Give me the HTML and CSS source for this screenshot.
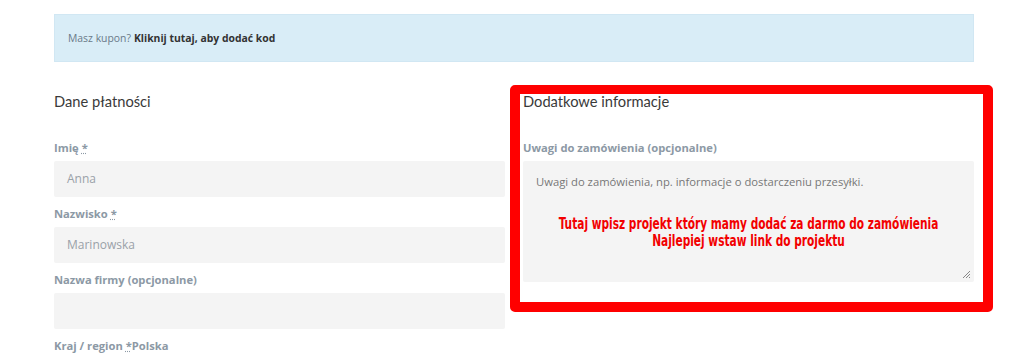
FILE: index.html
```html
<!DOCTYPE html>
<html lang="pl">
<head>
    <meta charset="UTF-8">
    <title>Zamówienie</title>
    <link rel="stylesheet" href="styles.css">
</head>
<body>
    <div class="checkout">
        <div class="coupon">
            Masz kupon? <a href="#">Kliknij tutaj, aby dodać kod</a>
        </div>

        <div class="columns">
            <div class="col">
                <h3>Dane płatności</h3>
                <label>Imię <abbr>*</abbr></label>
                <div class="input">Anna</div>
                <label>Nazwisko <abbr>*</abbr></label>
                <div class="input">Marinowska</div>
                <label>Nazwa firmy (opcjonalne)</label>
                <div class="input"></div>
                <label>Kraj / region <abbr>*</abbr>Polska</label>
            </div>

            <div class="col">
                <h3>Dodatkowe informacje</h3>
                <label>Uwagi do zamówienia (opcjonalne)</label>
                <div class="textarea">
                    <p class="placeholder">Uwagi do zamówienia, np. informacje o dostarczeniu przesyłki.</p>
                    <p class="note">Tutaj wpisz projekt który mamy dodać za darmo do zamówienia</p>
                    <p class="note">Najlepiej wstaw link do projektu</p>
                    <svg class="grip" width="9" height="9" viewBox="0 0 9 9">
                        <path d="M1 8 L8 1 M4 8 L8 4 M7 8 L8 7" stroke="#888" stroke-width="1"/>
                    </svg>
                </div>
            </div>
        </div>

        <div class="marker"></div>
    </div>
</body>
</html>
```

FILE: styles.css
```css
body{
    margin: 0;
    background-color: #fff;
    font-family: "Open Sans", sans-serif;
}
.checkout{
    position: relative;
    width: 920px;
    margin-left: 54px;
    padding-top: 14px;
}
.coupon{
    background-color: #d9edf7;
    border: 1px solid #d1e7f3;
    height: 48px;
    box-sizing: border-box;
    padding: 0 13px;
    display: flex;
    align-items: center;
    font-size: 10.4px;
    color: #6a7a89;
}
.coupon a{
    margin-left: 3px;
    color: #333;
    font-weight: 700;
    text-decoration: none;
}
.columns{
    display: grid;
    grid-template-columns: 451px 451px;
    column-gap: 18px;
    padding-top: 29px;
}
h3{
    font-family: Lato, sans-serif;
    font-weight: 400;
    font-size: 14.7px;
    color: #3a3a3a;
    margin: 0 0 28px;
    line-height: 20px;
}
label{
    display: block;
    font-size: 11.2px;
    font-weight: 700;
    color: #8c99a5;
    line-height: 18px;
    margin-bottom: 4px;
}
abbr{
    text-decoration: underline dotted;
}
.input{
    height: 36px;
    background-color: #f4f4f4;
    border-radius: 2px;
    font-size: 12px;
    color: #9aa1a8;
    padding-left: 13px;
    line-height: 36px;
    margin-bottom: 8px;
}
.textarea{
    position: relative;
    height: 121px;
    background-color: #f4f4f4;
    border-radius: 2px;
    padding: 13px 13px 0;
    box-sizing: border-box;
}
.placeholder{
    margin: 0 0 26px;
    font-size: 11.25px;
    color: #777;
    line-height: 16px;
}
.note{
    margin: 0 -40px;
    text-align: center;
    white-space: nowrap;
    font-family: "DejaVu Sans Condensed", sans-serif;
    font-stretch: condensed;
    font-weight: 700;
    font-size: 15.5px;
    line-height: 17px;
    color: #f20000;
    transform: scaleX(0.76);
}
.grip{
    position: absolute;
    right: 3px;
    bottom: 3px;
}
.marker{
    position: absolute;
    left: 456px;
    top: 85px;
    width: 463px;
    height: 208px;
    border: 10px solid #ff0000;
    border-top-width: 9px;
    border-radius: 5px;
}
```
